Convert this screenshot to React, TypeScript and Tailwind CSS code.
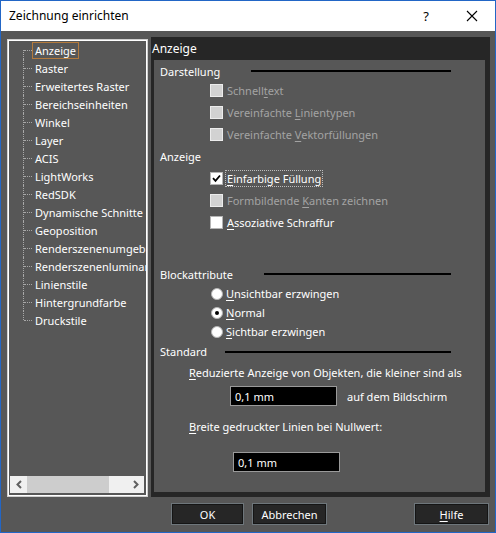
import clsx from 'clsx';

const treeItems = [
  'Anzeige',
  'Raster',
  'Erweitertes Raster',
  'Bereichseinheiten',
  'Winkel',
  'Layer',
  'ACIS',
  'LightWorks',
  'RedSDK',
  'Dynamische Schnitte',
  'Geoposition',
  'Renderszenenumgebung',
  'Renderszenenluminanz',
  'Linienstile',
  'Hintergrundfarbe',
  'Druckstile',
];

function Key({ children }: { children: string }) {
  return <span className="underline decoration-1 underline-offset-2">{children}</span>;
}

function Heading({ label, labelWidth, lineWidth, className }: { label: string; labelWidth: string; lineWidth: string; className?: string }) {
  return (
    <div className={clsx('flex items-center', className)}>
      <span className={clsx('text-white', labelWidth)}>{label}</span>
      <div className={clsx('h-[2px] bg-black', lineWidth)} />
    </div>
  );
}

function CheckRow({
  checked,
  disabled,
  focused,
  children,
}: {
  checked?: boolean;
  disabled?: boolean;
  focused?: boolean;
  children: React.ReactNode;
}) {
  return (
    <div className="flex items-center h-[22px] pl-[50px] gap-[2px]">
      <span
        className={clsx(
          'w-[13px] h-[13px] border flex items-center justify-center',
          disabled ? 'bg-[#d2d2d2] border-[#ececec]' : 'bg-white border-[#b4b4b4]'
        )}
      >
        {checked && (
          <svg width="9" height="9" viewBox="0 0 9 9">
            <path d="M1 4.2 L3.5 6.8 L8 1.5" fill="none" stroke="#000" strokeWidth="1.8" />
          </svg>
        )}
      </span>
      <span
        className={clsx(
          'px-[1px] h-[17px] flex items-center border whitespace-pre',
          focused ? 'border-dotted border-[#bdbdbd]' : 'border-transparent',
          disabled ? 'text-[#a3a3a3]' : 'text-white'
        )}
      >
        <span>{children}</span>
      </span>
    </div>
  );
}

function RadioRow({ selected, children }: { selected?: boolean; children: React.ReactNode }) {
  return (
    <div className="flex items-center h-[19px] pl-[51px] gap-[3px]">
      <span className="w-[12px] h-[12px] rounded-full bg-white border border-[#b4b4b4] flex items-center justify-center">
        {selected && <span className="w-[4px] h-[4px] rounded-full bg-black" />}
      </span>
      <span className="text-white">{children}</span>
    </div>
  );
}

function Field({ value, className }: { value: string; className?: string }) {
  return (
    <div className={clsx('w-[107px] h-[20px] bg-black border border-[#9a9a9a] flex items-center pl-[4px] text-white', className)}>
      {value}
    </div>
  );
}

function Button({ children, className }: { children: React.ReactNode; className?: string }) {
  return (
    <button
      className={clsx(
        'h-[22px] border border-[#6e767b] bg-[#262626] shadow-[inset_0_0_0_1px_#151515] text-white flex items-center justify-center',
        className
      )}
    >
      <span>{children}</span>
    </button>
  );
}

function Tree() {
  return (
    <div className="mt-[2px] w-[141px] h-[458px] border border-[#cfcfcf]">
      <div className="h-full border border-white flex flex-col">
        <div className="flex-1 overflow-hidden">
          {treeItems.map((item, i) => {
            const first = i === 0;
            const last = i === treeItems.length - 1;
            return (
              <div key={item} className="flex items-center h-[18px] whitespace-nowrap">
                <div className="relative w-[23px] h-full shrink-0">
                  <span
                    className={clsx(
                      'absolute left-[14px] w-0 border-l border-dotted border-[#a8a8a8]',
                      first ? 'top-[9px] bottom-0' : last ? 'top-0 h-[9px]' : 'top-0 bottom-0'
                    )}
                  />
                  <span className="absolute left-[15px] top-[9px] w-[8px] border-t border-dotted border-[#a8a8a8]" />
                </div>
                <span
                  className={clsx(
                    'h-[17px] px-[2px] flex items-center border text-white',
                    first ? 'border-[#b47a3c]' : 'border-transparent'
                  )}
                >
                  {item}
                </span>
              </div>
            );
          })}
        </div>
        {/* horizontal scrollbar */}
        <div className="ml-[1px] mr-[2px] mb-[2px] h-[17px] bg-[#f0f0f0] flex items-center">
          <div className="w-[17px] h-full flex items-center justify-center">
            <svg width="6" height="9" viewBox="0 0 6 9">
              <path d="M5 1 L1.5 4.5 L5 8" fill="none" stroke="#606060" strokeWidth="2" />
            </svg>
          </div>
          <div className="w-[82px] h-full bg-[#cdcdcd]" />
          <div className="flex-1" />
          <div className="w-[17px] h-full flex items-center justify-center">
            <svg width="6" height="9" viewBox="0 0 6 9">
              <path d="M1 1 L4.5 4.5 L1 8" fill="none" stroke="#606060" strokeWidth="2" />
            </svg>
          </div>
        </div>
      </div>
    </div>
  );
}

export default function App() {
  return (
    <div className="w-[496px] h-[533px] border border-[#2266c6] flex flex-col bg-[#575757] font-['Noto_Sans',sans-serif] text-[11px] leading-none">
      {/* Title bar */}
      <div className="h-[30px] bg-white flex items-center pl-[8px] text-[12px] text-black shrink-0">
        <span>Zeichnung einrichten</span>
        <div className="ml-auto flex h-full">
          <span className="w-[46px] flex items-center justify-center text-[13px]">?</span>
          <span className="w-[46px] flex items-center justify-center">
            <svg width="12" height="12" viewBox="0 0 12 12">
              <path d="M1 1 L11 11 M11 1 L1 11" stroke="#000" strokeWidth="1.1" />
            </svg>
          </span>
        </div>
      </div>

      <div className="flex-1 flex flex-col">
        <div className="flex pl-[6px] pt-[6px]">
          <Tree />

          <div className="ml-[3px] w-[339px] h-[460px] bg-[#262626] flex flex-col">
            <div className="h-[23px] flex items-center pl-[1px] text-white text-[12px]">Anzeige</div>
            <div className="flex-1 ml-[3px] mr-[5px] mb-[5px] bg-[#575757] flex flex-col pl-[6px]">
              <Heading label="Darstellung" labelWidth="w-[91px]" lineWidth="w-[200px]" className="mt-[3px] h-[16px]" />
              <CheckRow disabled>
                Schnell<Key>t</Key>ext
              </CheckRow>
              <CheckRow disabled>
                Vereinfachte <Key>L</Key>inientypen
              </CheckRow>
              <CheckRow disabled>
                Vereinfachte <Key>V</Key>ektorfüllungen
              </CheckRow>

              <div className="h-[22px] flex items-center text-white">Anzeige</div>
              <CheckRow checked focused>
                <Key>E</Key>infarbige Füllung
              </CheckRow>
              <CheckRow disabled>
                Formbildende <Key>K</Key>anten zeichnen
              </CheckRow>
              <CheckRow>
                <Key>A</Key>ssoziative Schraffur
              </CheckRow>

              <Heading label="Blockattribute" labelWidth="w-[104px]" lineWidth="w-[187px]" className="mt-[31px] h-[20px]" />
              <RadioRow>
                <Key>U</Key>nsichtbar erzwingen
              </RadioRow>
              <RadioRow selected>
                <Key>N</Key>ormal
              </RadioRow>
              <RadioRow>
                <Key>S</Key>ichtbar erzwingen
              </RadioRow>

              <Heading label="Standard" labelWidth="w-[65px]" lineWidth="w-[226px]" className="h-[21px]" />
              <div className="h-[20px] flex items-center pl-[29px] text-white">
                <span>
                  <Key>R</Key>eduzierte Anzeige von Objekten, die kleiner sind als
                </span>
              </div>
              <div className="mt-[4px] flex items-center pl-[70px]">
                <Field value="0,1 mm" />
                <span className="ml-[10px] text-white">auf dem Bildschirm</span>
              </div>
              <div className="mt-[10px] h-[20px] flex items-center pl-[29px] text-white">
                <span>
                  <Key>B</Key>reite gedruckter Linien bei Nullwert:
                </span>
              </div>
              <div className="mt-[16px] flex pl-[73px]">
                <Field value="0,1 mm" />
              </div>
            </div>
          </div>
        </div>

        <div className="flex mt-[6px] pl-[170px] pr-[6px]">
          <Button className="w-[73px]">OK</Button>
          <Button className="ml-[8px] w-[75px]">Abbrechen</Button>
          <Button className="ml-auto w-[75px]">
            <Key>H</Key>ilfe
          </Button>
        </div>
      </div>
    </div>
  );
}
